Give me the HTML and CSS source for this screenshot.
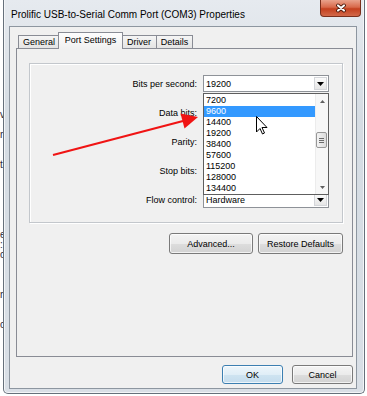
FILE: index.html
```html
<!DOCTYPE html>
<html lang="en">
  <head>
    <meta charset="UTF-8" />
    <title>Prolific USB-to-Serial Comm Port (COM3) Properties</title>
    <link rel="stylesheet" href="styles.css">
  </head>
  <body>
    <div class="behind">










vi

re


ti






e
:
o



n


c</div>

    <div class="window">
      <div class="titlebar">
        <span class="title">Prolific USB-to-Serial Comm Port (COM3) Properties</span>
        <button class="close" aria-label="Close">
          <svg width="12" height="10" viewBox="-6 -5 12 10">
            <path d="M-3 -2.6 L3 2.6 M3 -2.6 L-3 2.6" stroke="#4a1a0c" stroke-width="3.8" stroke-linecap="round" />
            <path d="M-3 -2.6 L3 2.6 M3 -2.6 L-3 2.6" stroke="#fff" stroke-width="2" stroke-linecap="round" />
          </svg>
        </button>
      </div>

      <div class="client">
        <div class="tabs">
          <div class="tab tab-general">General</div>
          <div class="tab tab-active">Port Settings</div>
          <div class="tab tab-driver">Driver</div>
          <div class="tab tab-details">Details</div>
        </div>

        <div class="panel">
          <div class="group">
            <label>Bits per second:</label>
            <div class="combo">
              <span>19200</span>
              <span class="drop"><svg width="7" height="4" viewBox="0 0 7 4"><path d="M0 0 H7 L3.5 4 Z" fill="#000" /></svg></span>
              <div class="dropdown">
                <div class="list">
                  <div class="item">7200</div>
                  <div class="item sel">9600</div>
                  <div class="item">14400</div>
                  <div class="item">19200</div>
                  <div class="item">38400</div>
                  <div class="item">57600</div>
                  <div class="item">115200</div>
                  <div class="item">128000</div>
                  <div class="item">134400</div>
                </div>
                <div class="scrollbar">
                  <div class="sb-btn"><svg width="5" height="3" viewBox="0 0 5 3"><path d="M0 3 L2.5 0 L5 3 Z" fill="#606060" /></svg></div>
                  <div class="thumb"><span></span><span></span><span></span></div>
                  <div class="sb-space"></div>
                  <div class="sb-btn"><svg width="5" height="3" viewBox="0 0 5 3"><path d="M0 0 L5 0 L2.5 3 Z" fill="#606060" /></svg></div>
                </div>
              </div>
            </div>

            <!-- these three are covered by the open list -->
            <label>Data bits:</label>
            <div class="combo"></div>

            <label>Parity:</label>
            <div class="combo"></div>

            <label>Stop bits:</label>
            <div class="combo"></div>

            <label>Flow control:</label>
            <div class="combo">
              <span>Hardware</span>
              <span class="drop"><svg width="7" height="4" viewBox="0 0 7 4"><path d="M0 0 H7 L3.5 4 Z" fill="#000" /></svg></span>
            </div>

            <!-- annotation drawn over the dialog -->
            <svg class="overlay" width="313" height="158" viewBox="0 0 313 158">
              <line x1="23" y1="91" x2="153" y2="57" stroke="#f01414" stroke-width="2.2" />
              <polygon points="168,53 154.5,64.5 150.5,49.5" fill="#f01414" />
              <path d="M226.5 52.5 V68 L230 64.5 L232.5 70 L234.5 69 L232 63.5 H237 Z" fill="#fff" stroke="#000" stroke-width="1" stroke-linejoin="round" />
            </svg>
          </div>

          <div class="panel-buttons">
            <button class="btn btn-advanced">Advanced...</button>
            <button class="btn btn-restore">Restore Defaults</button>
          </div>
        </div>

        <div class="dialog-buttons">
          <button class="btn btn-dialog btn-default">OK</button>
          <button class="btn btn-dialog">Cancel</button>
        </div>
      </div>
    </div>
  </body>
</html>
```

FILE: styles.css
```css
* {
  box-sizing: border-box;
}

body {
  margin: 0;
  width: 367px;
  height: 396px;
  overflow: hidden;
  display: flex;
  background: #fff;
  font-family: "Liberation Sans", Arial, sans-serif;
  font-size: 9px;
  color: #000;
}

/* page visible behind the dialog */
.behind {
  width: 3px;
  flex: none;
  overflow: hidden;
  white-space: pre;
  font-size: 10px;
  line-height: 10px;
  color: #2a2a3a;
}

.window {
  width: 362px;
  height: 394px;
  flex: none;
  display: flex;
  flex-direction: column;
  padding: 0 7px 4px 5px;
  background: linear-gradient(to bottom, #e6eaef, #d5dce3 30%, #d9dfe6);
  border: 1px solid #66707b;
  border-top: none;
  border-radius: 0 0 5px 5px;
  box-shadow: inset 1px 0 0 #f3f5f7, inset -1px 0 0 #f3f5f7, inset 0 -1px 0 #f3f5f7;
}

.titlebar {
  height: 26px;
  flex: none;
  display: flex;
  align-items: center;
}

.title {
  flex: 1;
  padding: 2px 0 0 2px;
  font-size: 10px;
  white-space: nowrap;
}

.close {
  align-self: flex-start;
  width: 41px;
  height: 17px;
  margin-right: -4px;
  padding: 0;
  display: flex;
  align-items: center;
  justify-content: center;
  border: 1px solid #7a2f1c;
  border-top: none;
  border-radius: 0 0 4px 4px;
  background: linear-gradient(to bottom, #e9a28c, #d8694a 45%, #c4401e 55%, #d2694a);
}

.client {
  flex: 1;
  display: flex;
  flex-direction: column;
  background: #f0f0f0;
  border: 1px solid #8d96a0;
  padding: 5px 3px 0 6px;
}

/* tabs */
.tabs {
  height: 16px;
  flex: none;
  display: flex;
  align-items: flex-end;
  padding-left: 2px;
}

.tab {
  height: 13px;
  padding-top: 1px;
  border: 1px solid #898c95;
  border-bottom: none;
  background: linear-gradient(to bottom, #f5f5f5, #e4e4e4);
  text-align: center;
  line-height: 11px;
}

.tab-general {
  width: 42px;
}

.tab-active {
  position: relative;
  z-index: 1;
  width: 65px;
  height: 17px;
  margin: 0 -2px -1px;
  padding-top: 2px;
  background: linear-gradient(to bottom, #fdfdfd, #f0f0f0);
}

.tab-driver {
  width: 36px;
}

.tab-details {
  width: 36px;
  border-left: none;
}

.panel {
  height: 309px;
  flex: none;
  border: 1px solid #898c95;
  background: #f0f0f0;
  padding: 14px 9px 0 12px;
}

/* settings group */
.group {
  position: relative;
  display: grid;
  grid-template-columns: 1fr 126px;
  grid-auto-rows: 17px;
  column-gap: 6px;
  row-gap: 12px;
  padding: 11px 13px 14px 0;
  border: 1px solid #c3c7cc;
  box-shadow: inset 1px 1px 0 #fff, 1px 1px 0 #fff;
}

.group label {
  align-self: center;
  text-align: right;
  white-space: nowrap;
}

.combo {
  position: relative;
  display: flex;
  align-items: center;
  padding-left: 2px;
  background: #fff;
  border: 1px solid #8e9298;
}

.drop {
  width: 13px;
  height: 13px;
  margin-left: auto;
  margin-right: 1px;
  display: flex;
  align-items: center;
  justify-content: center;
  background: linear-gradient(to bottom, #fbfbfb, #e6e6e6);
  border: 1px solid #d4d6da;
}

.dropdown {
  position: absolute;
  z-index: 2;
  top: 17px;
  left: -1px;
  width: 126px;
  height: 102px;
  display: flex;
  background: #fff;
  border: 1px solid #5e5e5e;
}

.list {
  flex: 1;
  padding-top: 1px;
}

.item {
  height: 11px;
  line-height: 11px;
  padding-left: 2px;
}

.item.sel {
  background: #3399ff;
  color: #fff;
}

.scrollbar {
  width: 13px;
  display: flex;
  flex-direction: column;
  background: #f7f7f7;
  border-left: 1px solid #ececec;
}

.sb-btn {
  height: 14px;
  display: flex;
  align-items: center;
  justify-content: center;
}

.thumb {
  height: 16px;
  margin: 24px 1px 0 0;
  display: flex;
  flex-direction: column;
  align-items: center;
  justify-content: center;
  gap: 1px;
  border: 1px solid #979797;
  border-radius: 2px;
  background: linear-gradient(to right, #f3f3f3, #dcdcdc);
}

.thumb span {
  width: 5px;
  height: 1px;
  background: #6b6b6b;
}

.sb-space {
  flex: 1;
}

.overlay {
  position: absolute;
  z-index: 3;
  left: 0;
  top: 0;
  overflow: visible;
  pointer-events: none;
}

/* buttons */
.btn {
  height: 21px;
  padding: 0;
  font-family: "Liberation Sans", Arial, sans-serif;
  font-size: 9px;
  color: #000;
  border: 1px solid #7a7a7a;
  border-radius: 3px;
  background: linear-gradient(to bottom, #f4f4f4, #ebebeb 50%, #dddddd 51%, #d2d2d2);
  box-shadow: inset 0 0 0 1px rgba(255, 255, 255, 0.7);
}

.panel-buttons {
  display: flex;
  justify-content: flex-end;
  gap: 5px;
  margin-top: 10px;
}

.btn-advanced {
  width: 84px;
}

.btn-restore {
  width: 85px;
}

.dialog-buttons {
  display: flex;
  justify-content: flex-end;
  gap: 9px;
  margin-top: 8px;
}

.btn-dialog {
  width: 61px;
  height: 19px;
}

.btn-default {
  border-color: #3c7fb1;
  background: linear-gradient(to bottom, #eef6fb, #e0eef7 50%, #cfe4f1 51%, #c4dced);
}
```
